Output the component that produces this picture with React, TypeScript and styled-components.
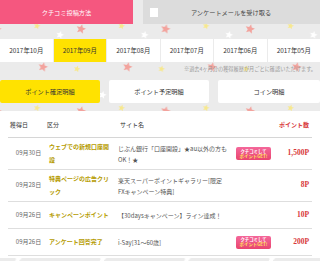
import React from 'react';
import styled, { createGlobalStyle } from 'styled-components';

const GlobalStyle = createGlobalStyle`
  html, body {
    margin: 0;
    padding: 0;
    background: #ebebeb;
  }
  body {
    font-family: 'Noto Sans CJK JP', 'Liberation Sans', sans-serif;
    color: #333;
  }
`;

interface Star {
  x: number;
  y: number;
  r: number;
  color: string;
}

// one tile of the background pattern (84.5 x 82)
const tileStars: Star[] = [
  { x: 10.5, y: 13, r: 4, color: '#ffffff' },
  { x: 29.5, y: 26, r: 3.5, color: '#f7e88e' },
  { x: 73.5, y: 29, r: 5, color: '#f3a39d' },
  { x: 52.5, y: 35, r: 4, color: '#ffffff' },
  { x: 35.5, y: 67, r: 5, color: '#f3a39d' },
  { x: 69.5, y: 69, r: 3.5, color: '#f7e88e' },
];

const starPoints = (cx: number, cy: number, r: number) => {
  const pts: string[] = [];
  for (let i = 0; i < 10; i++) {
    const rad = i % 2 === 0 ? r : r * 0.45;
    const a = (Math.PI / 5) * i - Math.PI / 2 + 0.25;
    pts.push(`${(cx + rad * Math.cos(a)).toFixed(2)},${(cy + rad * Math.sin(a)).toFixed(2)}`);
  }
  return pts.join(' ');
};

function StarField() {
  return (
    <StarLayer aria-hidden>
      <defs>
        <pattern id='stars' x='7.5' y='0' width='84.5' height='82' patternUnits='userSpaceOnUse'>
          {tileStars.map((s, i) => (
            <polygon key={i} points={starPoints(s.x, s.y, s.r)} fill={s.color} />
          ))}
        </pattern>
      </defs>
      <rect width='100%' height='100%' fill='url(#stars)' />
    </StarLayer>
  );
}

const months = ['2017年10月', '2017年09月', '2017年08月', '2017年07月', '2017年06月', '2017年05月'];

interface Row {
  date: string;
  kind: string;
  site: string;
  badge?: boolean;
  points: string;
}

const rows: Row[] = [
  { date: '09月30日', kind: 'ウェブでの新規口座開設', site: 'じぶん銀行「口座開設」★au以外の方もOK！★', badge: true, points: '1,500P' },
  { date: '09月28日', kind: '特典ページの広告クリック', site: '楽天スーパーポイントギャラリー[限定FXキャンペーン特典]', points: '8P' },
  { date: '09月26日', kind: 'キャンペーンポイント', site: '【30daysキャンペーン】ライン達成！', points: '10P' },
  { date: '09月26日', kind: 'アンケート回答完了', site: 'i-Say[31～60歳]', badge: true, points: '200P' },
];

export default function App() {
  return (
    <Page>
      <GlobalStyle />
      <StarField />
      <Content>
        <TopBar>
          <PinkButton>クチコミ投稿方法</PinkButton>
          <MailToggle>
            <CheckBox />
            <span>アンケートメールを受け取る</span>
          </MailToggle>
        </TopBar>

        <MonthTabs>
          {months.map((m) => (
            <MonthTab key={m} $active={m === '2017年09月'}>
              {m}
            </MonthTab>
          ))}
        </MonthTabs>

        <Note>※過去4ヶ月分の獲得履歴が月ごとに確認いただけます。</Note>

        <DetailTabs>
          <DetailTab $active>ポイント確定明細</DetailTab>
          <DetailTab>ポイント予定明細</DetailTab>
          <DetailTab>コイン明細</DetailTab>
        </DetailTabs>

        <Table>
          <HeaderRow>
            <span>獲得日</span>
            <span>区分</span>
            <span>サイト名</span>
            <span />
            <HeadPoints>ポイント数</HeadPoints>
          </HeaderRow>
          {rows.map((r, i) => (
            <DataRow key={i}>
              <DateCell>{r.date}</DateCell>
              <KindCell>{r.kind}</KindCell>
              <SiteCell>{r.site}</SiteCell>
              <div>
                {r.badge && (
                  <Badge>
                    <span>クチコミして</span>
                    <em>ポイントGET!</em>
                  </Badge>
                )}
              </div>
              <PointsCell>{r.points}</PointsCell>
            </DataRow>
          ))}
        </Table>
      </Content>
    </Page>
  );
}

const Page = styled.div`
  position: relative;
  width: 320px;
  min-height: 261px;
  overflow: hidden;
`;

const StarLayer = styled.svg`
  position: absolute;
  inset: 0;
  width: 100%;
  height: 100%;
  z-index: 0;
`;

const Content = styled.div`
  position: relative;
  z-index: 1;
  display: flex;
  flex-direction: column;
`;

const TopBar = styled.div`
  display: grid;
  grid-template-columns: 133px 1fr;
  gap: 10px;
  height: 24px;
`;

const PinkButton = styled.div`
  display: flex;
  align-items: center;
  justify-content: center;
  background: #f5577f;
  color: #fff;
  font-size: 6.2px;
`;

const MailToggle = styled.div`
  display: flex;
  align-items: center;
  padding: 0 16px 0 7px;
  background: #dcdcdc;
  color: #444;
  font-size: 6.2px;

  span {
    flex: 1;
    text-align: center;
  }
`;

const CheckBox = styled.i`
  display: block;
  width: 8px;
  height: 9px;
  background: #fff;
`;

const MonthTabs = styled.div`
  display: grid;
  grid-template-columns: repeat(6, 1fr);
  gap: 1px;
  margin-top: 15px;
  height: 23px;
`;

const MonthTab = styled.div<{ $active?: boolean }>`
  display: flex;
  align-items: center;
  justify-content: center;
  background: ${({ $active }) => ($active ? '#ffe200' : '#fff')};
  color: #333;
  font-size: 6.4px;
`;

const Note = styled.div`
  height: 18px;
  padding: 3px 4px 0 0;
  box-sizing: border-box;
  text-align: right;
  color: #999;
  font-size: 5.2px;
`;

const DetailTabs = styled.div`
  display: grid;
  grid-template-columns: 100px 100px 1fr;
  gap: 9px;
  height: 23px;
`;

const DetailTab = styled.div<{ $active?: boolean }>`
  display: flex;
  align-items: center;
  justify-content: center;
  border-radius: 2px;
  background: ${({ $active }) => ($active ? '#ffe200' : '#fff')};
  color: #333;
  font-size: 6.2px;
`;

const Table = styled.div`
  margin-top: 8px;
  padding: 0 8px 2px;
  background: #fff;
`;

const columns = '41px 69px 118px 35px 1fr';

const HeaderRow = styled.div`
  display: grid;
  grid-template-columns: ${columns};
  align-items: center;
  height: 26px;
  padding-left: 2px;
  border-bottom: 1px solid #d6d6d6;
  font-size: 6px;
  color: #333;

  span:nth-child(2) {
    margin-left: -4px;
  }
`;

const HeadPoints = styled.span`
  text-align: right;
  padding-right: 3px;
  color: #d8383a;
  font-weight: bold;
`;

const DataRow = styled.div`
  display: grid;
  grid-template-columns: ${columns};
  align-items: center;
  min-height: 27px;
  padding: 3px 0;
  box-sizing: border-box;
  border-bottom: 1px solid #dedede;
  font-size: 6px;
  line-height: 12.5px;
`;

const DateCell = styled.div`
  text-align: center;
  color: #666;
`;

const KindCell = styled.div`
  padding-right: 6px;
  color: #b59b00;
  font-weight: bold;
`;

const SiteCell = styled.div`
  padding-right: 8px;
  color: #555;
  line-height: 11px;
`;

const Badge = styled.div`
  display: flex;
  flex-direction: column;
  align-items: center;
  justify-content: center;
  width: 35px;
  height: 13px;
  border-radius: 2px;
  background: linear-gradient(#f4679a, #e9456f);
  font-size: 4.4px;
  line-height: 5px;
  font-weight: bold;

  span {
    color: #fff;
  }
  em {
    font-style: normal;
    color: #ffe35a;
  }
`;

const PointsCell = styled.div`
  text-align: right;
  padding-right: 3px;
  color: #d8383a;
  font-family: 'Liberation Serif', 'DejaVu Serif', serif;
  font-weight: bold;
  font-size: 7.5px;
`;
